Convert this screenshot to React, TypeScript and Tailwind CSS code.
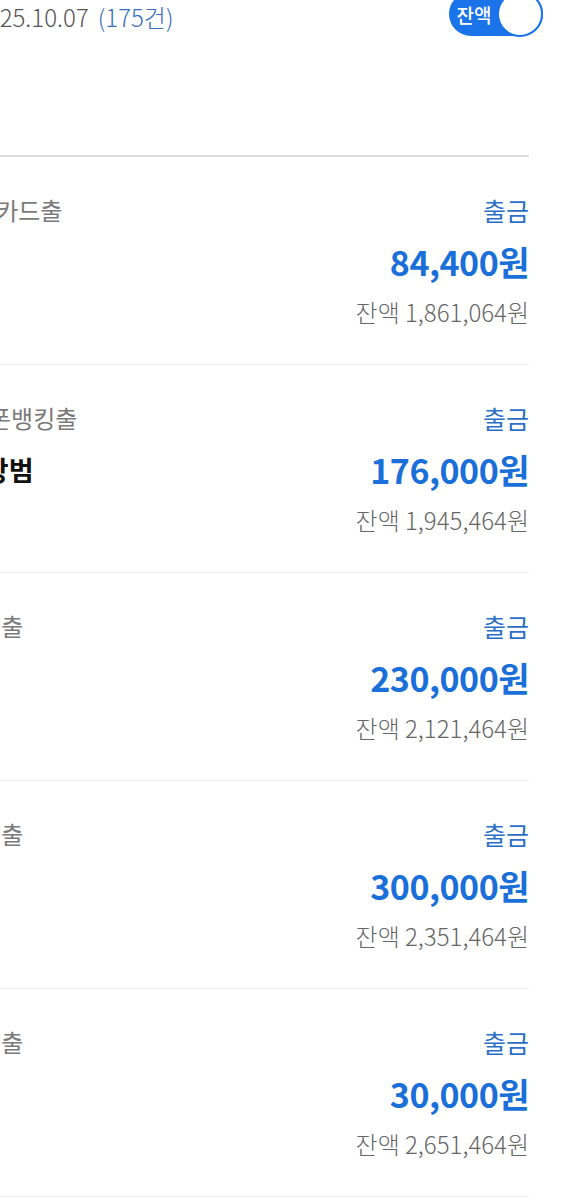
import React from 'react';

interface Tx {
  label: string;
  labelShift: string;
  name?: string;
  nameShift?: string;
  amount: string;
  balance: string;
}

const txs: Tx[] = [
  { label: '체크카드출', labelShift: '-ml-[48px]', amount: '84,400', balance: '1,861,064' },
  { label: '폰뱅킹출', labelShift: '-ml-[11px]', name: '김상범', nameShift: '-ml-[41px]', amount: '176,000', balance: '1,945,464' },
  { label: '타행출', labelShift: '-ml-[43px]', amount: '230,000', balance: '2,121,464' },
  { label: '타행출', labelShift: '-ml-[43px]', amount: '300,000', balance: '2,351,464' },
  { label: '타행출', labelShift: '-ml-[43px]', amount: '30,000', balance: '2,651,464' },
];

const font = "font-['Noto_Sans_CJK_KR','Noto_Sans',sans-serif]";

const BalanceToggle = () => (
  <div className="-mt-[8px] -mr-[14px] flex h-[44px] w-[94px] items-center rounded-full bg-[#1a73e8]">
    <span className="flex-1 pl-[2px] text-center text-[19px] font-medium leading-none text-white">잔액</span>
    <span className="h-[46px] w-[46px] rounded-full border-2 border-[#1a73e8] bg-white" />
  </div>
);

const TxRow = ({ tx }: { tx: Tx }) => (
  <div className="flex justify-between border-b border-[#eeeeee] pt-[27px] pb-[27px]">
    <div className="flex flex-col whitespace-nowrap">
      <span className={`${tx.labelShift} text-[24px] leading-[52px] text-[#7a7a7a]`}>{tx.label}</span>
      {tx.name && (
        <span className={`${tx.nameShift} text-[27px] font-bold leading-[51px] text-[#111111]`}>{tx.name}</span>
      )}
    </div>
    <div className="flex flex-col items-end whitespace-nowrap">
      <span className="text-[25px] leading-[52px] text-[#2d6fc8]">출금</span>
      <span className="text-[34px] font-bold leading-[51px] tracking-[-0.5px] text-[#1a6fd8]">{tx.amount}원</span>
      <span className="text-[24px] font-light leading-[50px] text-[#666666]">잔액 {tx.balance}원</span>
    </div>
  </div>
);

export default function App() {
  return (
    <div className={`${font} h-[1200px] w-full overflow-hidden bg-white pr-[40px]`}>
      <div className="flex items-start justify-between">
        <div className="-ml-[26px] whitespace-nowrap text-[24px] font-light leading-[34px] text-[#555555]">
          2025.10.07
          <span className="ml-[9px] text-[#3a6fc0]">(175건)</span>
        </div>
        <BalanceToggle />
      </div>

      <div className="mt-[119px] h-[2px] bg-[#dddddd]" />

      <div className="flex flex-col">
        {txs.map((tx, i) => (
          <TxRow key={i} tx={tx} />
        ))}
      </div>
    </div>
  );
}
